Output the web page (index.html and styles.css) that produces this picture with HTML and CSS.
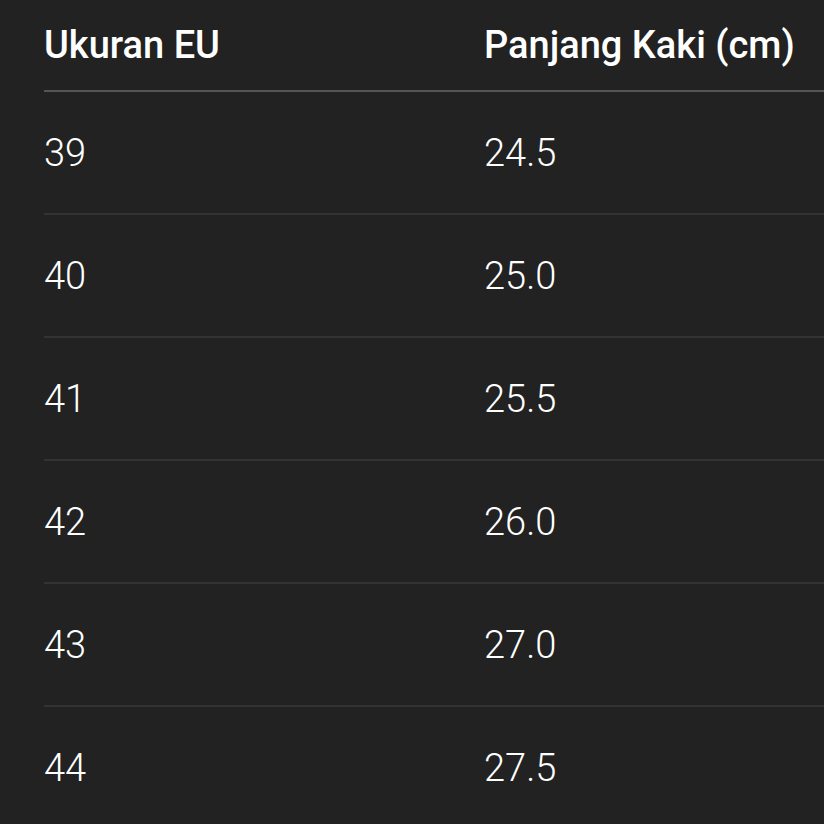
FILE: index.html
```html
<!DOCTYPE html>
<html lang="id">
<head>
<meta charset="utf-8">
<title>Tabel Ukuran</title>
<link rel="stylesheet" href="styles.css">
</head>
<body>
<div class="wrap">
  <div class="table">
    <div class="row head">
      <div class="cell">Ukuran EU</div>
      <div class="cell">Panjang Kaki (cm)</div>
    </div>
    <div class="row">
      <div class="cell">39</div>
      <div class="cell">24.5</div>
    </div>
    <div class="row">
      <div class="cell">40</div>
      <div class="cell">25.0</div>
    </div>
    <div class="row">
      <div class="cell">41</div>
      <div class="cell">25.5</div>
    </div>
    <div class="row">
      <div class="cell">42</div>
      <div class="cell">26.0</div>
    </div>
    <div class="row">
      <div class="cell">43</div>
      <div class="cell">27.0</div>
    </div>
    <div class="row">
      <div class="cell">44</div>
      <div class="cell">27.5</div>
    </div>
  </div>
</div>
</body>
</html>
```
FILE: styles.css
```css
html, body {
  margin: 0;
  padding: 0;
  background: #222222;
  height: 100%;
  overflow: hidden;
}
.wrap {
  padding-left: 44px;
}
.table {
  font-family: Roboto, "Liberation Sans", sans-serif;
  color: #ffffff;
}
.row {
  display: grid;
  grid-template-columns: 440px 1fr;
  align-items: center;
  height: 121px;
  border-bottom: 2px solid #333333;
  font-size: 38px;
  font-weight: 300;
}
.row.head {
  height: 90px;
  border-bottom: 2px solid #555555;
  font-weight: 500;
}
.cell {
  white-space: nowrap;
}
```
